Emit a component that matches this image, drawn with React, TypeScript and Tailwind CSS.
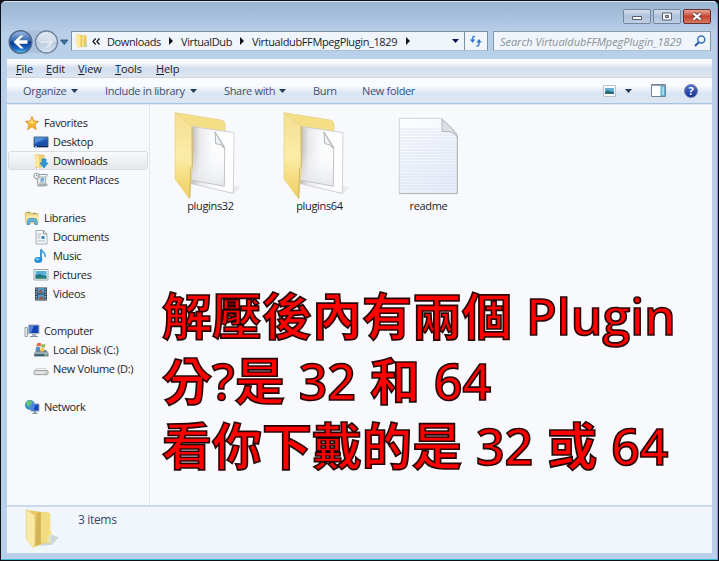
import type { ReactNode } from "react";

function Icon({ children, box = "0 0 16 16", className = "w-4 h-4" }: { children: ReactNode; box?: string; className?: string }) {
  return (
    <svg viewBox={box} className={`shrink-0 ${className}`} fill="none">
      {children}
    </svg>
  );
}

/* Small arrows */
function DownArrow({ className = "text-[#1f3a5c]" }: { className?: string }) {
  return (
    <Icon box="0 0 7 4" className={`w-[7px] h-1 ${className}`}>
      <path d="M0 0h7L3.500 4z" fill="currentColor" />
    </Icon>
  );
}

function RightArrow() {
  return (
    <Icon box="0 0 4 8" className="w-1 h-2">
      <path d="M0 0l4 4-4 4z" fill="#111" />
    </Icon>
  );
}

/* Sidebar icons */
const icons: Record<string, ReactNode> = {
  star: (
    <Icon>
      <path d="M8 1.500l1.900 4.600 4.800.3-3.700 3.200 1.200 4.900L8 11.800l-4.300 2.700 1.300-4.900L1.300 6.400l4.800-.3z" fill="#fbb52c" stroke="#dd9130" strokeWidth=".9" />
      <path d="M8 3l1.200 4 3 .3-4.200 1.500-4.200-2 3-.2z" fill="#ffe17a" />
    </Icon>
  ),
  desktop: (
    <Icon>
      <path d="M1 3h14v10H1z" fill="#2366c2" stroke="#516b89" />
      <path d="M1.500 3.500h13L2 9z" fill="#5590d9" />
      <path d="M1.500 10.500C6 9 10 8 14.500 6v6h-13z" fill="#184ca6" />
      <path d="M1 12.500h14" stroke="#152b4d" />
      <path d="M2 12.500h2" stroke="#65c1ed" />
    </Icon>
  ),
  downloads: (
    <Icon>
      <path d="M2 1.500l9 .8v11L3 14.500z" fill="#edcf72" stroke="#d1b05a" strokeWidth=".6" />
      <path d="M2 1l4 2v12l-4-2z" fill="#fbe8a0" />
      <path d="M9 6h4v4h2l-4 5-4-5h2z" fill="#279bdd" stroke="#1777b9" strokeWidth=".6" />
    </Icon>
  ),
  recent: (
    <Icon>
      <path d="M4 5h9l-1 9H5z" fill="#e4eaed" stroke="#9aa3a8" />
      <path d="M5 14h9.500v-2.500H6z" fill="#a7afb3" />
      <circle cx="3.500" cy="4" r="2.700" fill="#f4f7f8" stroke="#8b989f" />
      <path d="M3.500 2.500V4H5M6 2.500h8v2M7 8h4M7 10h4" stroke="#879ba8" />
      <path d="M8 6h3v3H8z" fill="#6bb1d5" />
    </Icon>
  ),
  libraries: (
    <Icon>
      <path d="M1 3l4-1 2 1 7 .5V13H2z" fill="#ecd280" stroke="#d4b35a" strokeWidth=".7" />
      <path d="M3 2.500h3M9 3.500h3" stroke="#7eac58" />
      <path d="M1.500 5.500h13l-.5 7H2.500z" fill="#f9e7a7" />
      <path d="M3 14.500l.7-4.500q.3-1.500 2-1.500h5q1.700 0 2 1.500l.7 4.500h-2.600l-.5-3H6.200l-.5 3z" fill="#5fb8dc" stroke="#368cb5" strokeWidth=".7" />
    </Icon>
  ),
  documents: (
    <Icon>
      <path d="M3 1.500h7.500L14 5v10H3z" fill="#f7fafc" stroke="#98a5af" strokeWidth=".9" />
      <path d="M10.500 1.500V5H14" stroke="#73818c" strokeWidth=".9" />
      <path d="M4.500 5h4M4.500 7h3M4.500 9h3M4.500 12h7.500" stroke="#a4b4c1" />
      <path d="M8.500 7h3v3h-3z" fill="#3684b8" />
    </Icon>
  ),
  music: (
    <Icon>
      <path d="M8 1.500v10" stroke="#3489cb" strokeWidth="1.800" />
      <path d="M8 1c.5 3 5.500 3.500 4 8" stroke="#4fa3dd" strokeWidth="1.700" />
      <ellipse cx="5.300" cy="12" rx="4" ry="3" fill="#248dd3" />
      <ellipse cx="4.600" cy="11.200" rx="1.700" ry="1" fill="#8ed4f6" />
    </Icon>
  ),
  pictures: (
    <Icon>
      <path d="M1 2.500h14v10.500H1z" fill="#fff" stroke="#9ca5ac" />
      <path d="M2.500 4h11v7.500h-11z" fill="#54b0d9" />
      <path d="M2.500 8l4.500-1 3 1.500 3.500.5v2.500h-11z" fill="#257283" />
      <path d="M2.500 10.500h11v1h-11z" fill="#39905b" />
    </Icon>
  ),
  videos: (
    <Icon>
      <path d="M2 1.500h12v13H2z" fill="#29394b" />
      <path d="M4.500 2h7v5.500h-7zM4.500 8.500h7v5.500h-7z" fill="#4b9fce" />
      <path d="M5 6l3-3 2 4zM5 13l4-3 2 4z" fill="#a9503c" />
      <path d="M3.200 2.500v12M12.800 2.500v12" stroke="#e9f0f5" strokeDasharray="1.300 1.200" />
    </Icon>
  ),
  computer: (
    <Icon>
      <path d="M1 4.500h2.500v9H1z" fill="#e7ecec" stroke="#96a4a7" />
      <path d="M4.500 2h10.500v8.500H4.500z" fill="#1743b5" stroke="#a5b5bf" />
      <path d="M5 2.500h5L7 10H5z" fill="#5185da" />
      <path d="M8 11h4v2H8z" fill="#aab5bd" />
      <path d="M6 13.500h8" stroke="#818e98" />
    </Icon>
  ),
  disk: (
    <Icon>
      <path d="M1 11l3-3h9l2.500 3v3.500H1z" fill="#73828c" />
      <path d="M1 10.500h14.500v1H1z" fill="#c5d1d6" />
      <path d="M2 12.500h9v1.500H2z" fill="#315d77" />
      <path d="M12 12.300h2v1.200h-2z" fill="#5ee66c" />
      <path d="M4 1.500q2.200-1.500 4.200 0L7.500 4.700q-2-1.200-4.200 0z" fill="#ed653a" />
      <path d="M8.800 1.800q2 1.200 3.700 0l-.7 3.200q-2 1-3.700 0z" fill="#8bb84a" />
      <path d="M3.200 5.300q2-1 4.200.2L6.600 8.800q-2-1.200-4.200 0z" fill="#448fd0" />
      <path d="M7.900 5.800q2 1 3.800 0l-.8 3.200q-2 1-3.700 0z" fill="#f7c73c" />
    </Icon>
  ),
  volume: (
    <Icon>
      <path d="M1 10l3-3h8.500L15 10v3.500H1z" fill="#b1b4b6" />
      <path d="M1.500 10l3-2.500h8l2 2.500z" fill="#f2f3f3" />
      <rect x="1" y="9.500" width="14" height="4.200" rx="1.200" fill="#dfe1e2" stroke="#888d90" strokeWidth=".8" />
      <path d="M12 12h1.500" stroke="#57cc60" />
    </Icon>
  ),
  network: (
    <Icon>
      <circle cx="6" cy="6" r="5" fill="#318dd1" />
      <path d="M2 3.500l4-2.500 3 2-3 2-1 3-2-1z" fill="#64c472" />
      <path d="M7 5h8v7H7z" fill="#1745b9" stroke="#94a9be" />
      <path d="M7.500 5.500h4l-2 6h-2z" fill="#4a84e0" />
      <path d="M10 12.500h2v1.500h-2zM8.500 14.500h5" stroke="#8798a8" />
    </Icon>
  ),
};

const groups = [
  { title: "Favorites", icon: "star", className: "mb-[19px]", items: [["Desktop", "desktop"], ["Downloads", "downloads"], ["Recent Places", "recent"]] },
  { title: "Libraries", icon: "libraries", className: "mb-[18px]", items: [["Documents", "documents"], ["Music", "music"], ["Pictures", "pictures"], ["Videos", "videos"]] },
  { title: "Computer", icon: "computer", className: "mb-[19px]", items: [["Local Disk (C:)", "disk"], ["New Volume (D:)", "volume"]] },
  { title: "Network", icon: "network", className: "", items: [] },
];

/* Large icons */
function FolderIcon() {
  return (
    <Icon box="36 18 207 270" className="w-[69px] h-[90px] ml-4">
      <defs>
        <linearGradient id="flap" x1="0" y1="0" x2="0" y2="1">
          <stop offset="0" stopColor="#f5df90" />
          <stop offset=".5" stopColor="#fbeca9" />
          <stop offset="1" stopColor="#efce5c" />
        </linearGradient>
        <linearGradient id="sheet" x1="0" y1="0" x2="1" y2="0">
          <stop offset="0" stopColor="#b9b1a9" />
          <stop offset=".22" stopColor="#e9e9ec" />
          <stop offset=".5" stopColor="#fafbfc" />
          <stop offset="1" stopColor="#fff" />
        </linearGradient>
        <linearGradient id="page" x1="0" y1="0" x2="0" y2="1">
          <stop offset=".4" stopColor="#fafbfd" stopOpacity="0" />
          <stop offset="1" stopColor="#e4e6eb" />
        </linearGradient>
      </defs>
      <path d="M222 242l20 4-22 22-20-5z" fill="#e8eaef" />
      <path d="M45 23l138 22q12 3 12 12v27L95 66z" fill="#f4df87" stroke="#e3cc7c" strokeWidth="2" />
      <path d="M93 64l129 19-2 182-130-30z" fill="url(#sheet)" stroke="#c8cace" strokeWidth="2.500" />
      <path d="M98 66l66 14 30 46-1 118-101-20z" fill="url(#page)" />
      <path d="M164 80l30 46-1 118-98-19" stroke="#c2c4c7" strokeWidth="3" />
      <path d="M165 81l2 35q16-1 26 14z" fill="#f0f1f3" stroke="#b0b4b9" strokeWidth="3" />
      <path d="M45 23l51 41 1 121-8 97-44-60z" fill="url(#flap)" stroke="#e6ce7e" strokeWidth="2" />
      <path d="M96 65l1 120-5 4-3 91" stroke="#ceb96e" strokeWidth="3" />
    </Icon>
  );
}

function TextFileIcon() {
  return (
    <Icon box="108 30 195 243" className="w-[65px] h-[81px] ml-[22px] mt-1">
      <defs>
        <linearGradient id="text-sheet" x1=".2" y1="0" x2=".7" y2="1">
          <stop offset="0" stopColor="#fcfdff" />
          <stop offset="1" stopColor="#e8edf8" />
        </linearGradient>
      </defs>
      <path d="M118 40h126l48 48v177H118z" fill="url(#text-sheet)" stroke="#c5cbd3" strokeWidth="2.500" />
      <path
        d="M120 72h118M120 81h124M120 90h168M120 99h170M120 108h170M120 117h170M120 126h170M120 135h170M120 144h170M120 153h170M120 162h170M120 171h170M120 180h170M120 189h170M120 198h170M120 207h170M120 216h170M120 225h170M120 234h170M120 243h170M120 252h170"
        stroke="#d2ddf0"
        strokeWidth="2"
      />
      <path d="M246 42v38h22q16 3 24 16-4-12-14-24z" fill="#dcdfe3" stroke="#b1b6bc" strokeWidth="3" />
      <path d="M117 266h175V95" stroke="#aeb5b8" strokeWidth="3" />
    </Icon>
  );
}

const files = [
  { name: "plugins32", icon: <FolderIcon /> },
  { name: "plugins64", icon: <FolderIcon /> },
  { name: "readme", icon: <TextFileIcon /> },
];

function CaptionButtons() {
  return (
    <div className="flex gap-[2px] pt-[7px] pr-[1px] ml-auto">
      <button className="w-7 h-[15px] rounded-[2px] border border-[#75859a] bg-gradient-to-b from-[#d5e0ed] via-[#afc2d9] to-[#bfd1e6] grid place-items-center">
        <Icon box="0 0 12 9" className="w-3 h-[9px]">
          <path d="M1.500 4.500h9v3h-9z" fill="#fff" stroke="#525c68" />
        </Icon>
      </button>
      <button className="w-7 h-[15px] rounded-[2px] border border-[#75859a] bg-gradient-to-b from-[#d5e0ed] via-[#afc2d9] to-[#bfd1e6] grid place-items-center">
        <Icon box="0 0 12 9" className="w-3 h-[9px]">
          <path d="M1.500 1h9v7h-9z" fill="#fff" stroke="#525c68" />
          <path d="M4.500 3.500h3v2h-3z" fill="#9fb4cc" stroke="#525c68" />
        </Icon>
      </button>
      <button className="w-7 h-[15px] rounded-[2px] border border-[#66302f] bg-gradient-to-b from-[#e5a496] via-[#c3432c] to-[#d77862] grid place-items-center">
        <Icon box="0 0 12 9" className="w-3 h-[9px]">
          <path d="M2.500 1.500l7 6M9.500 1.500l-7 6" stroke="#5c4a50" strokeWidth="3.800" />
          <path d="M2.500 1.500l7 6M9.500 1.500l-7 6" stroke="#fff" strokeWidth="2.200" />
        </Icon>
      </button>
    </div>
  );
}

function NavButtons() {
  return (
    <Icon box="0 0 62 26" className="w-[62px] h-[26px]">
      <defs>
        <linearGradient id="back" x1="0" y1="0" x2="0" y2="1">
          <stop offset="0" stopColor="#9dbfe5" />
          <stop offset=".45" stopColor="#3567b2" />
          <stop offset=".5" stopColor="#0b3790" />
          <stop offset=".8" stopColor="#1e68c3" />
          <stop offset="1" stopColor="#5bd0f3" />
        </linearGradient>
        <linearGradient id="forward" x1="0" y1="0" x2="0" y2="1">
          <stop offset="0" stopColor="#e3eaf3" />
          <stop offset=".48" stopColor="#cfdae7" />
          <stop offset=".5" stopColor="#b7c8dc" />
          <stop offset="1" stopColor="#d9e6f4" />
        </linearGradient>
      </defs>
      <path d="M12 1.500h27q6 0 9 5l2 6.500-2 6q-3 5-9 5H12" fill="#a9c1dd" />
      <circle cx="13.500" cy="13" r="11.300" fill="url(#back)" stroke="#52698a" strokeWidth="1.400" />
      <circle cx="39.500" cy="13" r="11" fill="url(#forward)" stroke="#74869f" strokeWidth="1.300" />
      <path d="M6.500 13l7-6.500h3.200L12 11.300h8.500v3.400H12l4.700 4.800h-3.200z" fill="#fff" />
      <path d="M47 13l-6.500-6.500h-3l4.500 5h-9v3h9l-4.500 5h3z" fill="#e0e7ef" stroke="#c3cfdc" strokeWidth=".5" />
      <path d="M53.500 11h7.500L57.300 15.500z" fill="#3b6f9d" stroke="#27547e" strokeWidth=".8" />
    </Icon>
  );
}

function AddressBar() {
  return (
    <div className="flex items-center w-[417px] h-[20px] mt-[2px] border border-[#7f8fa3] border-b-[#b3bfcc] bg-[#f0f5fb] tracking-[-0.38px]">
      <Icon className="w-4 h-4 ml-[2px]">
        <path d="M3 1.500l9.500 1v11L4 14.500z" fill="#e9c75e" />
        <path d="M2 1l4.500 2v12L2 13z" fill="#fbe99f" />
        <path d="M9 2v11.500" stroke="#f7e08d" strokeWidth="2" />
        <path d="M11.500 9.500h1.500V14l-2 .5z" fill="#b7d4ba" />
      </Icon>
      <Icon box="0 0 8 7" className="w-2 h-[7px] ml-[2px]">
        <path d="M3.700 .5L1 3.500l2.700 3M7.500 .5l-2.700 3 2.700 3" stroke="#111" strokeWidth="1.200" />
      </Icon>
      <span className="w-[53px] ml-[7px]">Downloads</span>
      <span className="ml-[9px]"><RightArrow /></span>
      <span className="w-[51px] ml-[8px]">VirtualDub</span>
      <span className="ml-[8px]"><RightArrow /></span>
      <span className="w-[145px] ml-[8px] whitespace-nowrap">VirtualdubFFMpegPlugin_1829</span>
      <span className="ml-[9px]"><RightArrow /></span>
      <span className="ml-auto mr-[5px]"><DownArrow className="text-[#101052]" /></span>
      <div className="w-[23px] h-full border-l border-[#7f8fa3] grid place-items-center">
        <Icon box="0 0 14 14" className="w-[14px] h-[14px]">
          <path d="M6 2.500Q3.500 2 3.500 5v1" stroke="#3a86d0" strokeWidth="1.500" />
          <path d="M1 5.500h5.200L3.500 9z" fill="#2b77c5" />
          <path d="M7.500 12Q10 12.500 10 9.500V8" stroke="#3a86d0" strokeWidth="1.500" />
          <path d="M7.300 8.500h5.400L10 5z" fill="#2b77c5" />
        </Icon>
      </div>
    </div>
  );
}

function CommandBar() {
  return (
    <div className="flex items-center h-[27px] pl-4 pr-[14px] border-t border-[#d2d6dd] border-b border-b-[#a9c3de] bg-gradient-to-b from-[#fafbfe] from-30% to-[#dbe6f4] to-60% text-[#42506f]">
      <span className="w-[43px]">Organize</span>
      <span className="ml-[5px] mt-[1px]"><DownArrow /></span>
      <span className="w-20 ml-[27px] whitespace-nowrap">Include in library</span>
      <span className="ml-[5px] mt-[1px]"><DownArrow /></span>
      <span className="w-[50px] ml-[27px] whitespace-nowrap">Share with</span>
      <span className="ml-[5px] mt-[1px]"><DownArrow /></span>
      <span className="w-[23px] ml-[27px]">Burn</span>
      <span className="ml-[26px] whitespace-nowrap">New folder</span>
      <Icon box="0 0 13 12" className="w-[13px] h-3 ml-auto">
        <path d="M.5 .5h12v11H.5z" fill="#f9fbfd" stroke="#b8c2cb" />
        <path d="M2 3h9v6H2z" fill="#5eadd3" />
        <path d="M2 7q3-3 4-1l5 1v2H2z" fill="#286a78" />
      </Icon>
      <span className="ml-[9px]"><DownArrow /></span>
      <Icon box="0 0 15 13" className="w-[15px] h-[13px] ml-[19px]">
        <path d="M.5 .5h14v12H.5z" fill="#fff" stroke="#718292" />
        <path d="M.5 1.500h14" stroke="#91a5b8" />
        <path d="M9.500 2h4.500v10H9.500z" fill="#5eb3cc" />
        <path d="M11 3h2v8h-2z" fill="#a5dce8" />
      </Icon>
      <div className="w-[14px] h-[14px] ml-[18px] rounded-full border border-[#6e7b9f] bg-gradient-to-b from-[#5274d1] to-[#142d91] text-white text-[11px] leading-[12px] font-bold text-center">?</div>
    </div>
  );
}

function Sidebar() {
  return (
    <aside className="w-[143px] pt-[8px] border-r border-dotted border-[#cbd5e6]">
      {groups.map((group) => (
        <div key={group.title} className={group.className}>
          <div className="flex items-center h-[19px] pl-[17px] gap-[4px]">
            {icons[group.icon]}
            <span>{group.title}</span>
          </div>
          {group.items.map(([name, icon]) => (
            <div
              key={name}
              className={
                name === "Downloads"
                  ? "flex items-center h-[19px] ml-[1px] mr-[1px] pl-[24px] gap-[4px] rounded-[3px] border border-[#d9dddf] bg-gradient-to-b from-[#f8fafb] to-[#e5e7e8]"
                  : "flex items-center h-[19px] pl-[26px] gap-[4px]"
              }
            >
              {icons[icon]}
              <span className="whitespace-nowrap">{name}</span>
            </div>
          ))}
        </div>
      ))}
    </aside>
  );
}

export default function App() {
  return (
    <div className="w-[719px] h-[561px] bg-[#101018] pt-[1px] pl-[1px] pr-[1px] pb-[1px] overflow-hidden font-['Open_Sans',sans-serif] text-[11px] leading-[15px] tracking-[-0.33px] text-[#1c1c28] cursor-default">
      <div className="relative flex flex-col h-[559px] pl-[6px] pr-[5px] rounded-t-[5px] border-b border-b-[#35bfd0] border-r border-r-[#35bfd0] border-t border-t-[#dce6f0] bg-[#b9d0ea]">
        <div className="absolute inset-x-0 top-0 h-[32px] rounded-t-[5px] bg-gradient-to-b from-[#99b4d1] to-[#b9d0ea]" />

        {/* Title bar */}
        <div className="relative flex h-[27px]">
          <CaptionButtons />
        </div>

        {/* Address and search */}
        <div className="relative flex h-[30px]">
          <NavButtons />
          <div className="ml-[2px]">
            <AddressBar />
          </div>
          <div className="flex items-center w-[218px] h-[20px] mt-[2px] ml-[5px] pl-[6px] pr-[4px] border border-[#8797aa] border-b-[#b3bfcc] bg-[#f0f5fb]">
            <span className="italic tracking-[-0.04px] text-[#8a9098] whitespace-nowrap">Search VirtualdubFFMpegPlugin_1829</span>
            <Icon box="0 0 12 12" className="w-3 h-3 ml-auto">
              <circle cx="7.300" cy="4.500" r="3.500" fill="#eef5fc" stroke="#3a73bd" strokeWidth="1.500" />
              <path d="M4.700 7.200L1 11" stroke="#2b5ba6" strokeWidth="2" />
            </Icon>
          </div>
        </div>

        {/* Menu bar */}
        <div className="relative flex items-center h-[18px] pl-[9px] tracking-[-0.1px] bg-gradient-to-b from-[#f8fafd] from-20% via-[#d3deee] via-50% to-[#dce6f3]">
          <span className="w-[30px]"><u>F</u>ile</span>
          <span className="w-8"><u>E</u>dit</span>
          <span className="w-[37px]"><u>V</u>iew</span>
          <span className="w-[41px]"><u>T</u>ools</span>
          <span><u>H</u>elp</span>
        </div>
        <CommandBar />

        {/* Folder content */}
        <div className="relative flex h-[401px] border-t border-[#dfe9f5] bg-[#f8f9fc]">
          <Sidebar />
          <main className="flex items-start pl-[6px] pt-[6px]">
            {files.map((file) => (
              <div key={file.name} className="w-[109px]">
                <div className="flex items-start h-[87px]">{file.icon}</div>
                <div className="text-center">{file.name}</div>
              </div>
            ))}
          </main>
        </div>

        {/* Details pane */}
        <div className="relative flex h-[48px] border-t-2 border-[#cbdaec] bg-[#f1f6fb]">
          <Icon box="72 56 110 124" className="w-[37px] h-[41px] ml-[17px] mt-[1px]">
            <path d="M150 135l27 10-22 22-34 4z" fill="#cbd6e5" />
            <path d="M78 62l72 9v86l-50 18z" fill="#e8c95f" />
            <path d="M110 70l14-2v96l-20 8z" fill="#d3b355" />
            <path d="M122 67l28 4v86l-28 6z" fill="#f2dc83" />
            <path d="M78 61l26 17v94l-4 4-22-26z" fill="#faeaa4" stroke="#e5cb6c" strokeWidth="2" />
            <path d="M144 128q8-8 10 2v30l-12 4z" fill="#f6df80" />
            <path d="M145 140l6-4v22l-6 2z" fill="#d9e6ee" />
          </Icon>
          <span className="ml-[17px] mt-[5px] text-[#36476f] text-[12px]">3 items</span>
        </div>

        {/* Caption over the file list */}
        <div className="absolute left-[161px] top-[282px] font-['Open_Sans','Noto_Sans_CJK_TC',sans-serif] text-[50px] leading-[65px] font-semibold tracking-normal [word-spacing:1px] text-[#fe0000] whitespace-nowrap [-webkit-text-stroke:1.7px_#250505]">
          <div className="h-[65px]">解壓後內有兩個 Plugin</div>
          <div className="h-[65px]">分?是 32 和 64</div>
          <div className="h-[65px]">看你下戴的是 32 或 64</div>
        </div>
      </div>
    </div>
  );
}
